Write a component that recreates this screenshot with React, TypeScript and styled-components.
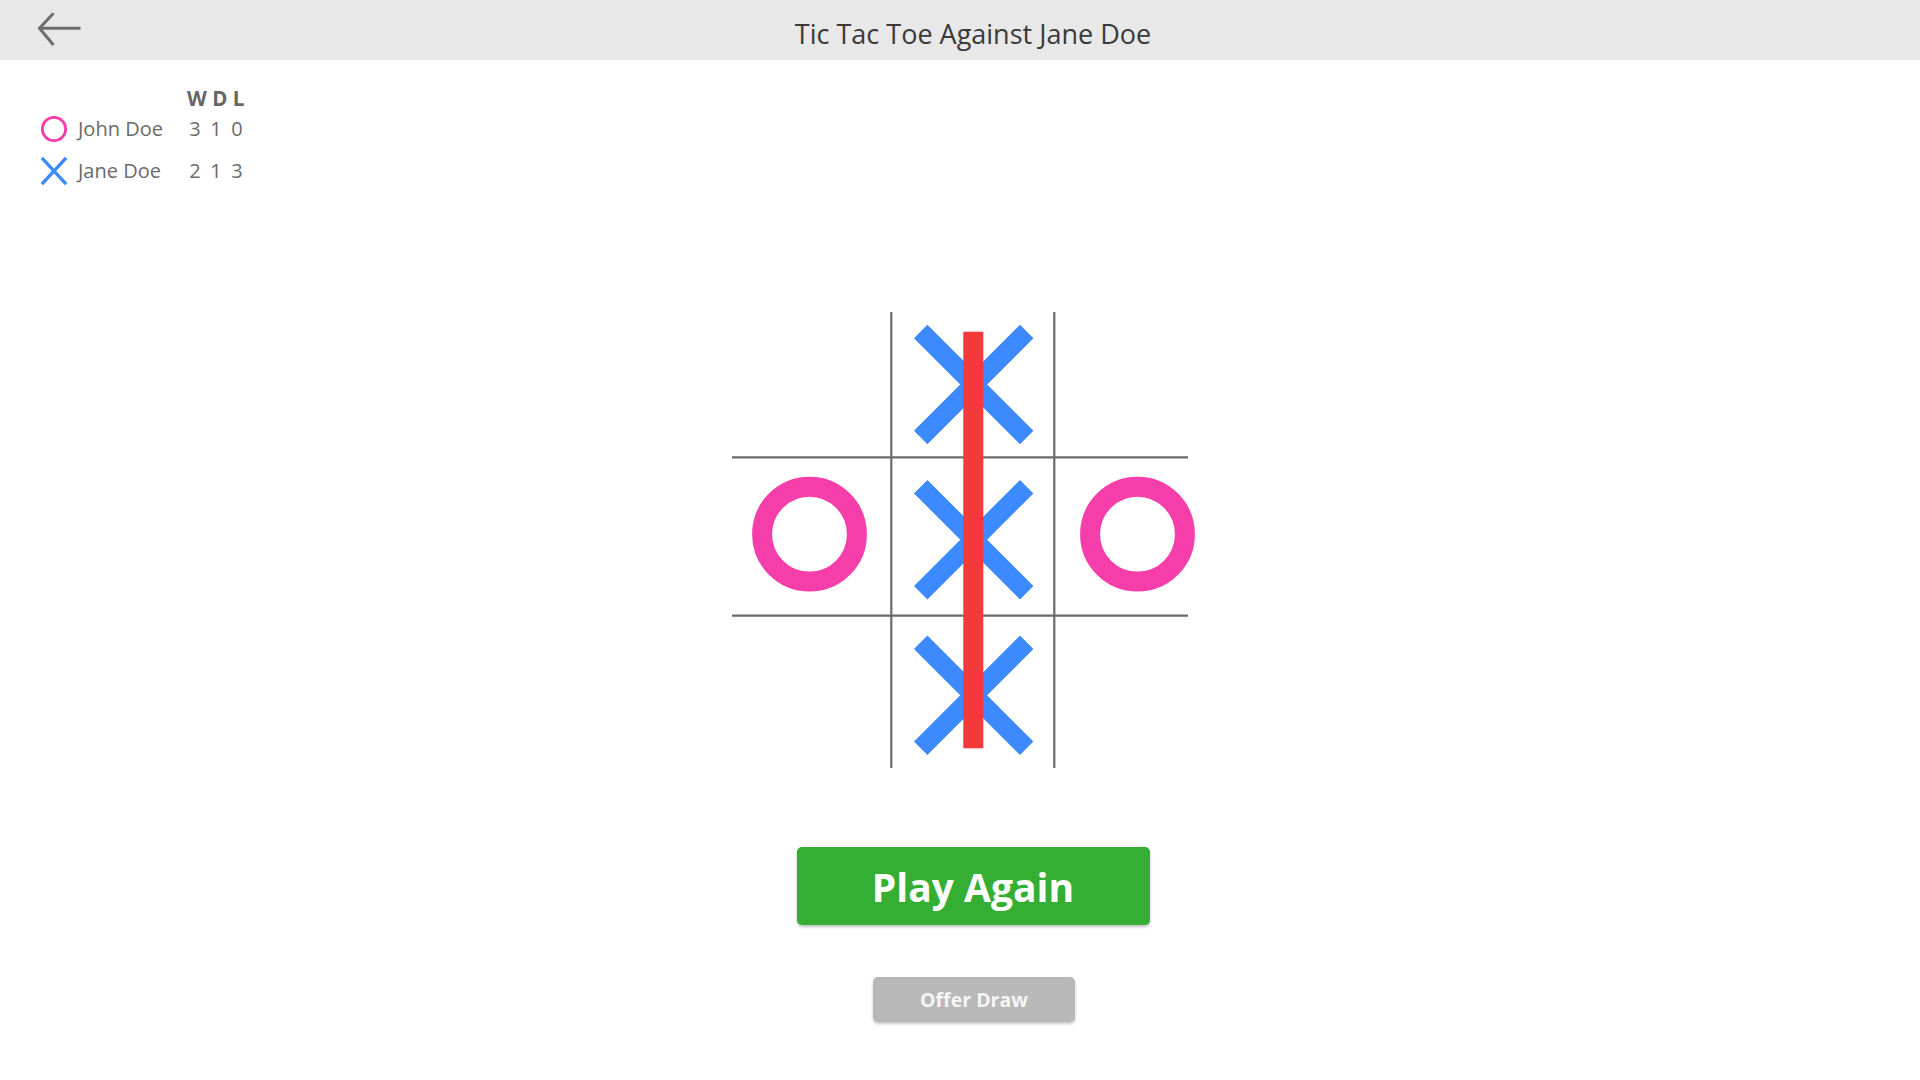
import React from "react";
import styled, { createGlobalStyle } from "styled-components";

const GlobalStyle = createGlobalStyle`
  html, body { margin: 0; padding: 0; background: #ffffff; overflow: hidden; }
  body { font-family: "Open Sans", "Noto Sans", Arial, sans-serif; }
  * { box-sizing: border-box; }
`;

const Page = styled.div`
  width: 1920px;
  height: 1080px;
  display: flex;
  flex-direction: column;
`;

const Header = styled.header`
  height: 60px;
  background: #e8e8e8;
  display: grid;
  grid-template-columns: 146px 1fr 120px;
  align-items: start;
`;

const BackButton = styled.button`
  border: none;
  background: transparent;
  padding: 10px 0 0 37px;
  margin: 0;
  width: 100px;
  height: 50px;
  display: flex;
  align-items: flex-start;
  cursor: pointer;
`;

const Title = styled.h1`
  margin: 0;
  padding-top: 18px;
  font-size: 27px;
  line-height: 32px;
  font-weight: 400;
  color: #3a3a3a;
  text-align: center;
`;

const Body = styled.main`
  display: flex;
  flex-direction: column;
`;

const Scoreboard = styled.div`
  margin: 22px 0 0 40px;
  display: grid;
  grid-template-columns: 28px 116.5px 21px 21px 21px;
  grid-template-rows: 26px 42px 42px;
  align-items: center;
  align-self: flex-start;
  font-size: 20px;
  line-height: 24px;
  color: #6b6b6b;
`;

const HeadCell = styled.div`
  grid-column: 3 / span 3;
  align-self: end;
  margin-bottom: -2px;
  padding-left: 2.5px;
  white-space: pre;
  font-weight: 700;
  font-size: 20.5px;
  color: #666666;
`;

const Blank = styled.div``;

const IconCell = styled.div`
  display: flex;
  align-items: center;
  justify-content: center;
`;

const Name = styled.div`
  padding-left: 10px;
  white-space: nowrap;
`;

const Num = styled.div`
  text-align: center;
`;

const Main = styled.section`
  padding-left: 26px;
  display: flex;
  flex-direction: column;
  align-items: center;
`;

const Board = styled.svg`
  display: block;
  margin-top: 113px;
`;

const PlayAgain = styled.button`
  margin-top: 72px;
  width: 353px;
  height: 78px;
  border: none;
  border-radius: 5px;
  background: #34ae33;
  color: #ffffff;
  font-family: "Open Sans", "Noto Sans", Arial, sans-serif;
  font-weight: 700;
  font-size: 39px;
  box-shadow: 0 2px 3px rgba(0, 0, 0, 0.25);
  cursor: pointer;
`;

const OfferDraw = styled.button`
  margin-top: 52px;
  margin-left: 2px;
  width: 202px;
  height: 45px;
  border: none;
  border-radius: 5px;
  background: #b8b8b8;
  color: #f5f5f5;
  font-family: "Open Sans", "Noto Sans", Arial, sans-serif;
  font-weight: 700;
  font-size: 19.5px;
  box-shadow: 0 2px 3px rgba(0, 0, 0, 0.22);
  cursor: pointer;
`;

const PINK = "#f53ea9";
const BLUE = "#3c8afd";
const RED = "#f4393b";
const LINE = "#6b6b6b";

const BackArrow = () => (
  <svg width="46" height="38" viewBox="0 0 46 38">
    <path d="M2.5 18.3 H43.5 M16.5 3.3 L2.5 18.3 L16.5 35" fill="none" stroke="#6d6d6d" strokeWidth="3" />
  </svg>
);

const SmallO = () => (
  <svg width="30" height="30" viewBox="0 0 30 30">
    <circle cx="15" cy="15" r="12.5" fill="none" stroke={PINK} strokeWidth="3" />
  </svg>
);

const SmallX = () => (
  <svg width="30" height="32" viewBox="0 0 30 32">
    <path d="M2 2 L28 30 M28 2 L2 30" fill="none" stroke={BLUE} strokeWidth="3.6" />
  </svg>
);

const BigX = ({ cx, cy }: { cx: number; cy: number }) => (
  <path
    d={`M${cx - 53} ${cy - 53} L${cx + 53} ${cy + 53} M${cx + 53} ${cy - 53} L${cx - 53} ${cy + 53}`}
    stroke={BLUE}
    strokeWidth="19"
    fill="none"
  />
);

const BigO = ({ cx, cy }: { cx: number; cy: number }) => (
  <circle cx={cx} cy={cy} r="47.4" stroke={PINK} strokeWidth="20" fill="none" />
);

const players = [
  { name: "John Doe", mark: "o", w: 3, d: 1, l: 0 },
  { name: "Jane Doe", mark: "x", w: 2, d: 1, l: 3 },
];

export default function App() {
  return (
    <>
      <GlobalStyle />
      <Page>
        <Header>
          <BackButton aria-label="Back">
            <BackArrow />
          </BackButton>
          <Title>Tic Tac Toe Against Jane Doe</Title>
          <Blank />
        </Header>
        <Body>
          <Scoreboard>
            <Blank />
            <Blank />
            <HeadCell>W D L</HeadCell>
            {players.map((p) => (
              <React.Fragment key={p.name}>
                <IconCell>{p.mark === "o" ? <SmallO /> : <SmallX />}</IconCell>
                <Name>{p.name}</Name>
                <Num>{p.w}</Num>
                <Num>{p.d}</Num>
                <Num>{p.l}</Num>
              </React.Fragment>
            ))}
          </Scoreboard>
          <Main>
            <Board width="490" height="470" viewBox="0 0 490 470">
              <g stroke={LINE} strokeWidth="2.2">
                <line x1="163.3" y1="7" x2="163.3" y2="463" />
                <line x1="326.3" y1="7" x2="326.3" y2="463" />
                <line x1="4" y1="152.3" x2="460" y2="152.3" />
                <line x1="4" y1="310.7" x2="460" y2="310.7" />
              </g>
              <BigX cx={245.7} cy={79.5} />
              <BigX cx={245.7} cy={234.7} />
              <BigX cx={245.7} cy={390.3} />
              <BigO cx={81.5} cy={229.2} />
              <BigO cx={409.5} cy={229.2} />
              <rect x="235.3" y="26.7" width="20" height="416.6" fill={RED} />
            </Board>
            <PlayAgain>Play Again</PlayAgain>
            <OfferDraw>Offer Draw</OfferDraw>
          </Main>
        </Body>
      </Page>
    </>
  );
}
